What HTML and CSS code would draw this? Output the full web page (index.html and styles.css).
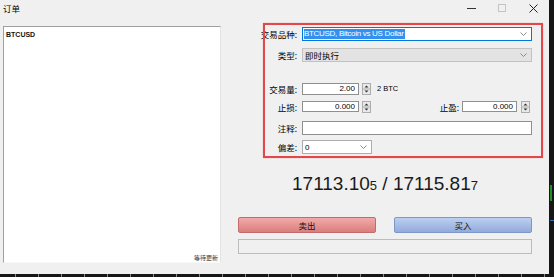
FILE: index.html
```html
<!DOCTYPE html>
<html>
<head>
<meta charset="utf-8">
<link rel="stylesheet" href="styles.css">
</head>
<body>
<div class="screen">
  <div class="window">
    <div class="titlebar">
      <span class="title">订单</span>
      <div class="controls">
        <span class="ctl-min"></span>
        <span class="ctl-max"></span>
        <svg class="ctl-close" width="9" height="9" viewBox="0 0 9 9"><path d="M0.5 0.5 L8.5 8.5 M8.5 0.5 L0.5 8.5" stroke="#222" stroke-width="1" fill="none"/></svg>
      </div>
    </div>
    <div class="content">
      <div class="symbols">
        <div class="sym">BTCUSD</div>
        <div class="status">等待更新</div>
      </div>
      <div class="main">
        <div class="form">
          <div class="row r1">
            <span class="lbl">交易品种:</span>
            <div class="select wide focus">
              <span class="sel-text">BTCUSD, Bitcoin vs US Dollar</span>
              <svg class="chev" width="7" height="4" viewBox="0 0 7 4"><path d="M0.5 0.5 L3.5 3.5 L6.5 0.5" stroke="#8a8a8a" fill="none"/></svg>
            </div>
          </div>
          <div class="row r2">
            <span class="lbl">类型:</span>
            <div class="select wide disabled">
              <span class="cjk-val">即时执行</span>
              <svg class="chev" width="7" height="4" viewBox="0 0 7 4"><path d="M0.5 0.5 L3.5 3.5 L6.5 0.5" stroke="#8a8a8a" fill="none"/></svg>
            </div>
          </div>
          <div class="row r3">
            <span class="lbl">交易量:</span>
            <div class="num">2.00</div>
            <svg class="spin" width="9" height="12" viewBox="0 0 9 12"><rect x="0.5" y="0.5" width="8" height="11" fill="#e9e9e9" stroke="#adadad"/><line x1="1" y1="6" x2="8" y2="6" stroke="#adadad"/><path d="M2.5 4.5 L4.5 2.5 L6.5 4.5 Z" fill="#333"/><path d="M2.5 7.5 L4.5 9.5 L6.5 7.5 Z" fill="#333"/></svg>
            <span class="unit">2 BTC</span>
          </div>
          <div class="row r4">
            <span class="lbl">止损:</span>
            <div class="num sm">0.000</div>
            <svg class="spin" width="9" height="12" viewBox="0 0 9 12"><rect x="0.5" y="0.5" width="8" height="11" fill="#e9e9e9" stroke="#adadad"/><line x1="1" y1="6" x2="8" y2="6" stroke="#adadad"/><path d="M2.5 4.5 L4.5 2.5 L6.5 4.5 Z" fill="#333"/><path d="M2.5 7.5 L4.5 9.5 L6.5 7.5 Z" fill="#333"/></svg>
            <div class="tp">
              <span class="lbl-inline">止盈:</span>
              <div class="num sm tpnum">0.000</div>
              <svg class="spin tpspin" width="9" height="12" viewBox="0 0 9 12"><rect x="0.5" y="0.5" width="8" height="11" fill="#e9e9e9" stroke="#adadad"/><line x1="1" y1="6" x2="8" y2="6" stroke="#adadad"/><path d="M2.5 4.5 L4.5 2.5 L6.5 4.5 Z" fill="#333"/><path d="M2.5 7.5 L4.5 9.5 L6.5 7.5 Z" fill="#333"/></svg>
            </div>
          </div>
          <div class="row r5">
            <span class="lbl">注释:</span>
            <div class="text-input"></div>
          </div>
          <div class="row r6">
            <span class="lbl">偏差:</span>
            <div class="select dev">
              <span class="val">0</span>
              <svg class="chev" width="7" height="4" viewBox="0 0 7 4"><path d="M0.5 0.5 L3.5 3.5 L6.5 0.5" stroke="#8a8a8a" fill="none"/></svg>
            </div>
          </div>
        </div>
        <div class="lower">
          <div class="price">17113.10<span class="small">5</span> / 17115.81<span class="small">7</span></div>
          <div class="actions">
            <div class="btn sell">卖出</div>
            <div class="btn buy">买入</div>
          </div>
          <div class="progress"></div>
        </div>
      </div>
    </div>
    <div class="highlight"></div>
  </div>
  <div class="chart-edge">
    <div class="green"></div>
    <div class="blue"></div>
  </div>
</div>
<div class="axis"></div>
</body>
</html>
```

FILE: styles.css
```css
html, body {
  margin: 0;
  padding: 0;
}
body {
  width: 554px;
  height: 277px;
  background: #161616;
  overflow: hidden;
  font-family: "Liberation Sans", "Noto Sans CJK SC", sans-serif;
  color: #000;
}
.screen {
  display: flex;
  height: 274px;
}
.window {
  position: relative;
  width: 549px;
  height: 274px;
  background: #f0f0f0;
  display: flex;
  flex-direction: column;
}
.titlebar {
  height: 20px;
  display: flex;
  align-items: center;
  justify-content: space-between;
  flex-shrink: 0;
}
.title {
  font-family: "Noto Sans CJK SC", sans-serif;
  font-size: 8.5px;
  margin-left: 3px;
  margin-top: -5px;
}
.controls {
  display: flex;
  align-items: center;
  margin-right: 11px;
  margin-top: -4px;
}
.ctl-min {
  width: 9px;
  height: 1px;
  background: #333;
}
.ctl-max {
  width: 6px;
  height: 6px;
  border: 1px solid #c4c4c4;
  margin-left: 22px;
}
.ctl-close {
  margin-left: 23px;
  display: block;
}
.content {
  display: flex;
  flex: 1;
}
.symbols {
  margin: 6px 0 0 3px;
  width: 218px;
  height: 237px;
  box-sizing: border-box;
  background: #fff;
  border: 1px solid;
  border-color: #a0a0a0 #e3e3e3 #f8f8f8 #a0a0a0;
  display: flex;
  flex-direction: column;
  justify-content: space-between;
}
.sym {
  font-size: 7px;
  font-weight: bold;
  padding: 4px 0 0 2px;
  line-height: 8px;
  color: #111;
}
.status {
  align-self: flex-end;
  font-family: "Noto Sans CJK SC", sans-serif;
  font-size: 6px;
  line-height: 7px;
  margin: 0 2px 1px 0;
  color: #333;
}
.main {
  display: flex;
  flex-direction: column;
  width: 328px;
  padding-left: 9px;
  box-sizing: border-box;
}
.form {
  margin-top: 7px;
  width: 302px;
}
.row {
  display: flex;
  align-items: center;
  height: 14px;
}
.r2 { margin-top: 7px; }
.r3 { margin-top: 20px; height: 13px; }
.r4 { margin-top: 5px; height: 13px; padding-right: 2px; }
.r5 { margin-top: 8px; }
.r6 { margin-top: 5px; }
.lbl {
  width: 67px;
  flex-shrink: 0;
  margin-right: 5px;
  text-align: right;
  font-family: "Noto Sans CJK SC", sans-serif;
  font-size: 8.5px;
  line-height: 10px;
  white-space: nowrap;
}
.lbl-inline {
  font-family: "Noto Sans CJK SC", sans-serif;
  font-size: 8.5px;
  line-height: 10px;
  margin-right: 3px;
}
.select {
  height: 14px;
  box-sizing: border-box;
  border: 1px solid #adadad;
  background: #fff;
  display: flex;
  align-items: center;
  justify-content: space-between;
  padding: 0 4px 0 1px;
}
.wide { width: 230px; }
.focus { border-color: #0078d7; }
.disabled {
  background: #e3e3e3;
  border-color: #c2c2c2;
}
.sel-text {
  background: #3390f0;
  color: #fff;
  font-size: 8px;
  letter-spacing: -0.3px;
  line-height: 10px;
  padding-right: 1px;
}
.cjk-val {
  font-family: "Noto Sans CJK SC", sans-serif;
  font-size: 8.5px;
  line-height: 10px;
  margin-left: 1px;
}
.chev { display: block; }
.num {
  width: 57px;
  height: 12px;
  box-sizing: border-box;
  border: 1px solid #8f8f8f;
  background: #fff;
  text-align: right;
  font-size: 8px;
  line-height: 10px;
  padding-right: 3px;
}
.num.sm { height: 11px; line-height: 9px; }
.tpnum { width: 55px; }
.spin {
  display: block;
  margin-left: 3px;
  flex-shrink: 0;
}
.tpspin { margin-left: 4px; }
.unit {
  font-size: 7.5px;
  margin-left: 6px;
}
.tp {
  margin-left: auto;
  display: flex;
  align-items: center;
}
.text-input {
  width: 230px;
  height: 14px;
  box-sizing: border-box;
  border: 1px solid #8f8f8f;
  background: #fff;
}
.dev { width: 70px; }
.val { font-size: 8px; margin-left: 1px; }
.lower {
  margin-left: 8px;
  width: 294px;
  display: flex;
  flex-direction: column;
}
.price {
  margin-top: 19px;
  text-align: center;
  font-size: 19px;
  line-height: 22px;
  color: #1a1a1a;
}
.small { font-size: 13px; }
.actions {
  margin-top: 20px;
  display: flex;
  justify-content: space-between;
}
.btn {
  width: 138px;
  height: 16px;
  box-sizing: border-box;
  border-radius: 2px;
  text-align: center;
  font-family: "Noto Sans CJK SC", sans-serif;
  font-size: 8.5px;
  line-height: 14px;
  color: #111;
}
.sell {
  border: 1px solid #c46a6a;
  background: linear-gradient(#f3a9a9, #d97f7f);
}
.buy {
  border: 1px solid #7d98c8;
  background: linear-gradient(#bcd0f2, #93aadb);
}
.progress {
  margin-top: 6px;
  height: 15px;
  box-sizing: border-box;
  border: 1px solid #bcbcbc;
  background: #f0f0f0;
}
.highlight {
  position: absolute;
  left: 263px;
  top: 23px;
  width: 280px;
  height: 135px;
  box-sizing: border-box;
  border: 2px solid #e4464a;
  box-shadow: 0 0 1px #f09a9a;
}
.chart-edge {
  width: 5px;
  height: 274px;
  display: flex;
  flex-direction: column;
}
.green {
  margin-top: 185px;
  margin-left: 1px;
  width: 2px;
  height: 16px;
  background: #2a8a2a;
}
.blue {
  margin-top: 19px;
  margin-left: 1px;
  width: 4px;
  height: 1px;
  background: #3a6ab0;
}
.axis {
  height: 3px;
  background: repeating-linear-gradient(90deg, #161616 0, #161616 15px, #8a8a8a 15px, #8a8a8a 16px, #161616 16px, #161616 23px);
}
```
